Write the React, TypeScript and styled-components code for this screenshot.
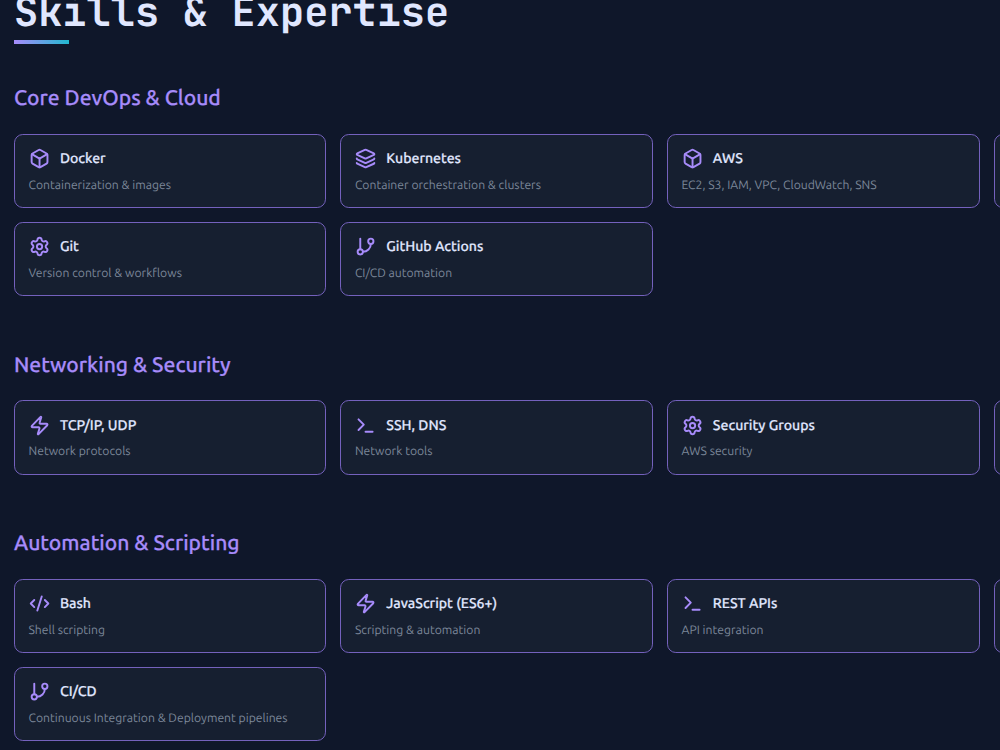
import React from "react";
import styled, { createGlobalStyle } from "styled-components";
import { Box, CodeXml, GitBranch, Layers, Settings, Terminal, Zap } from "lucide-react";
import type { LucideIcon } from "lucide-react";

const GlobalStyle = createGlobalStyle`
  * { box-sizing: border-box; }
  html, body { margin: 0; background: #0f172a; overflow: hidden; }
  body {
    font-family: Ubuntu, "Noto Sans", sans-serif;
    text-rendering: geometricPrecision;
  }
`;

const Page = styled.main`
  height: 750px;
  overflow: hidden;
  padding-left: 14px;
  background: #0f172a;
`;

const Title = styled.h1`
  margin: -14px 0 0;
  height: 54px;
  line-height: 54px;
  font-family: "JetBrains Mono", "DejaVu Sans Mono", monospace;
  font-size: 40.3px;
  font-weight: 700;
  color: #e0e7ff;
  white-space: nowrap;
`;

const Underline = styled.div`
  width: 55.4px;
  height: 3.6px;
  background: linear-gradient(90deg, #a78bfa, #22b8cf);
`;

const Section = styled.section<{ $first?: boolean }>`
  margin-top: ${(p) => (p.$first ? "40.8px" : "54.8px")};
`;

const Heading = styled.h2`
  margin: 0 0 23.3px;
  height: 26px;
  line-height: 26px;
  font-size: 21.1px;
  font-weight: 500;
  color: #a78bfa;
  -webkit-text-stroke: 0.25px #a78bfa;
`;

const Grid = styled.div`
  display: grid;
  grid-template-columns: 312.4px repeat(3, 312.6px);
  grid-auto-rows: 74.3px;
  gap: 13.9px 14px;
`;

const Card = styled.article`
  padding: 13.5px;
  border: 1px solid #7461bd;
  border-radius: 8.8px;
  background: #161f30;
`;

const CardHead = styled.div`
  display: flex;
  align-items: center;
  gap: 9.9px;
  height: 21.1px;
  padding-left: 0.4px;

  svg {
    flex: none;
    color: #a78bfa;
  }
`;

const Name = styled.h3`
  margin: 0 0 0.9px;
  line-height: 20px;
  font-size: 14.1px;
  font-weight: 500;
  color: #e0e7ff;
  -webkit-text-stroke: 0.2px #e0e7ff;
  white-space: nowrap;
`;

const Detail = styled.p`
  margin: 8.4px 0 0;
  line-height: 16.4px;
  font-size: 12.17px;
  color: #7c8799;
  white-space: nowrap;
`;

interface Skill {
  icon: LucideIcon;
  name: string;
  detail: string;
}

interface Group {
  title: string;
  rows: (Skill | null)[];
}

/* null keeps the tile at the clipped edge of the grid */
const groups: Group[] = [
  {
    title: "Core DevOps & Cloud",
    rows: [
      { icon: Box, name: "Docker", detail: "Containerization & images" },
      { icon: Layers, name: "Kubernetes", detail: "Container orchestration & clusters" },
      { icon: Box, name: "AWS", detail: "EC2, S3, IAM, VPC, CloudWatch, SNS" },
      null,
      { icon: Settings, name: "Git", detail: "Version control & workflows" },
      { icon: GitBranch, name: "GitHub Actions", detail: "CI/CD automation" },
    ],
  },
  {
    title: "Networking & Security",
    rows: [
      { icon: Zap, name: "TCP/IP, UDP", detail: "Network protocols" },
      { icon: Terminal, name: "SSH, DNS", detail: "Network tools" },
      { icon: Settings, name: "Security Groups", detail: "AWS security" },
      null,
    ],
  },
  {
    title: "Automation & Scripting",
    rows: [
      { icon: CodeXml, name: "Bash", detail: "Shell scripting" },
      { icon: Zap, name: "JavaScript (ES6+)", detail: "Scripting & automation" },
      { icon: Terminal, name: "REST APIs", detail: "API integration" },
      null,
      { icon: GitBranch, name: "CI/CD", detail: "Continuous Integration & Deployment pipelines" },
    ],
  },
];

function SkillCard({ skill }: { skill: Skill | null }) {
  if (!skill) return <Card />;
  const Icon = skill.icon;
  return (
    <Card>
      <CardHead>
        <Icon size={21.1} strokeWidth={2.2} />
        <Name>{skill.name}</Name>
      </CardHead>
      <Detail>{skill.detail}</Detail>
    </Card>
  );
}

export default function App() {
  return (
    <>
      <GlobalStyle />
      <Page>
        <Title>Skills &amp; Expertise</Title>
        <Underline />
        {groups.map((group, i) => (
          <Section key={group.title} $first={i === 0}>
            <Heading>{group.title}</Heading>
            <Grid>
              {group.rows.map((skill, j) => (
                <SkillCard key={j} skill={skill} />
              ))}
            </Grid>
          </Section>
        ))}
      </Page>
    </>
  );
}
